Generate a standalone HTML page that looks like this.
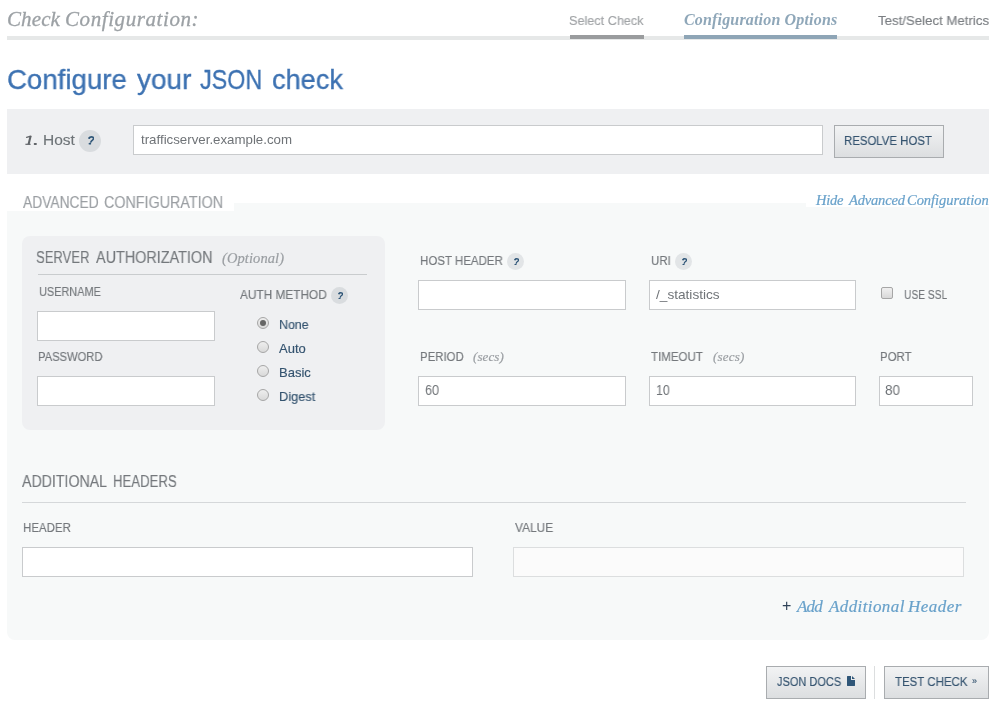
<!DOCTYPE html>
<html><head><meta charset="utf-8"><style>
html,body{margin:0;padding:0;background:#fff;width:998px;height:708px;overflow:hidden;position:relative}
</style></head><body>
<div style="position:absolute;left:6.60px;top:9.41px;font-family:'Liberation Serif', serif;font-size:21px;line-height:21px;color:#9ca1a5;font-style:italic;font-weight:normal;letter-spacing:0.100px;white-space:nowrap;will-change:transform;-webkit-text-stroke:0.3px #9ca1a5;">Check</div>
<div style="position:absolute;left:64.60px;top:9.41px;font-family:'Liberation Serif', serif;font-size:21px;line-height:21px;color:#9ca1a5;font-style:italic;font-weight:normal;letter-spacing:0.585px;white-space:nowrap;will-change:transform;-webkit-text-stroke:0.3px #9ca1a5;">Configuration:</div>
<div style="position:absolute;left:7px;top:36px;width:982px;height:4px;box-sizing:border-box;background:#e6e8e8"></div>
<div style="position:absolute;left:570px;top:35px;width:74px;height:4px;box-sizing:border-box;background:#9a9c9e"></div>
<div style="position:absolute;left:684px;top:35px;width:153px;height:4px;box-sizing:border-box;background:#8ea5b6"></div>
<div style="position:absolute;left:569.36px;top:14.00px;font-family:'Liberation Sans', sans-serif;font-size:13px;line-height:13px;color:#a0a3a6;font-style:normal;font-weight:normal;letter-spacing:0.000px;white-space:nowrap;will-change:transform;transform:scaleX(0.9741);transform-origin:0 0;-webkit-text-stroke:0.15px #a0a3a6;">Select Check</div>
<div style="position:absolute;left:683.56px;top:11.60px;font-family:'Liberation Serif', serif;font-size:16px;line-height:16px;color:#8fa7b9;font-style:italic;font-weight:bold;letter-spacing:0.168px;white-space:nowrap;will-change:transform;">Configuration Options</div>
<div style="position:absolute;left:877.84px;top:13.57px;font-family:'Liberation Sans', sans-serif;font-size:13.5px;line-height:13.5px;color:#7a7e82;font-style:normal;font-weight:normal;letter-spacing:0.000px;white-space:nowrap;will-change:transform;transform:scaleX(0.9806);transform-origin:0 0;-webkit-text-stroke:0.15px #7a7e82;">Test/Select Metrics</div>
<div style="position:absolute;left:6.92px;top:64.87px;font-family:'Liberation Sans', sans-serif;font-size:28.5px;line-height:28.5px;color:#3d72b2;font-style:normal;font-weight:normal;letter-spacing:0.000px;white-space:nowrap;will-change:transform;transform:scaleX(0.9691);transform-origin:0 0;-webkit-text-stroke:0.35px #3d72b2;">Configure</div>
<div style="position:absolute;left:137.04px;top:64.87px;font-family:'Liberation Sans', sans-serif;font-size:28.5px;line-height:28.5px;color:#3d72b2;font-style:normal;font-weight:normal;letter-spacing:0.000px;white-space:nowrap;will-change:transform;transform:scaleX(0.9809);transform-origin:0 0;-webkit-text-stroke:0.35px #3d72b2;">your</div>
<div style="position:absolute;left:200.48px;top:64.87px;font-family:'Liberation Sans', sans-serif;font-size:28.5px;line-height:28.5px;color:#3d72b2;font-style:normal;font-weight:normal;letter-spacing:0.000px;white-space:nowrap;will-change:transform;transform:scaleX(0.8187);transform-origin:0 0;-webkit-text-stroke:0.35px #3d72b2;">JSON</div>
<div style="position:absolute;left:272.08px;top:64.87px;font-family:'Liberation Sans', sans-serif;font-size:28.5px;line-height:28.5px;color:#3d72b2;font-style:normal;font-weight:normal;letter-spacing:0.000px;white-space:nowrap;will-change:transform;transform:scaleX(0.9525);transform-origin:0 0;-webkit-text-stroke:0.35px #3d72b2;">check</div>
<div style="position:absolute;left:7px;top:109px;width:982px;height:65px;box-sizing:border-box;background:#eff0f2"></div>
<svg style="position:absolute;left:24px;top:135px" width="14" height="11" viewBox="0 0 14 11"><path d="M2.6 2.4L6.9 1.2" stroke="#606468" stroke-width="1.3" stroke-linecap="round"/><path d="M6.6 1.0L4.6 9.2" stroke="#606468" stroke-width="2.1"/><path d="M1.4 9.3H6.6" stroke="#606468" stroke-width="1.2"/><rect x="9.8" y="8.0" width="3" height="1.9" rx="0.6" fill="#606468"/></svg>
<div style="position:absolute;left:42.52px;top:131.88px;font-family:'Liberation Sans', sans-serif;font-size:15.5px;line-height:15.5px;color:#6e7478;font-style:normal;font-weight:normal;letter-spacing:0.000px;white-space:nowrap;will-change:transform;transform:scaleX(0.9953);transform-origin:0 0;-webkit-text-stroke:0.15px #6e7478;">Host</div>
<div style="position:absolute;left:79px;top:130px;width:22px;height:22px;box-sizing:border-box;background:#d9dcdf;border-radius:50%"></div>
<svg style="position:absolute;left:87.8px;top:136.3px" width="6.2" height="8.5" viewBox="0 0 5 7"><path d="M0.9 1.7C1.3 0.5 4.5 0.2 4.5 2.0C4.5 3.5 2.6 3.5 2.3 5.0" fill="none" stroke="#2f5678" stroke-width="1.3" stroke-linecap="round"/><circle cx="1.1" cy="1.6" r="0.75" fill="#2f5678"/><ellipse cx="1.5" cy="6.3" rx="1.1" ry="0.7" fill="#2f5678"/></svg>
<div style="position:absolute;left:133px;top:125px;width:690px;height:30px;box-sizing:border-box;background:#fff;border:1px solid #c9cbcd"></div>
<div style="position:absolute;left:140.64px;top:133.00px;font-family:'Liberation Sans', sans-serif;font-size:13px;line-height:13px;color:#6f7377;font-style:normal;font-weight:normal;letter-spacing:0.000px;white-space:nowrap;will-change:transform;transform:scaleX(1.0214);transform-origin:0 0;">trafficserver.example.com</div>
<div style="position:absolute;left:834px;top:125px;width:110px;height:33px;box-sizing:border-box;background:linear-gradient(#f2f3f4,#dcdee0);border:1px solid #a9acaf"></div>
<div style="position:absolute;left:844.20px;top:134.00px;font-family:'Liberation Sans', sans-serif;font-size:13px;line-height:13px;color:#34536f;font-style:normal;font-weight:normal;letter-spacing:0.000px;white-space:nowrap;will-change:transform;transform:scaleX(0.8774);transform-origin:0 0;-webkit-text-stroke:0.15px #34536f;">RESOLVE HOST</div>
<div style="position:absolute;left:7px;top:203px;width:982px;height:437px;box-sizing:border-box;background:#f7f9f9;border-radius:0 0 8px 8px"></div>
<div style="position:absolute;left:7px;top:185px;width:227px;height:26px;box-sizing:border-box;background:#fff"></div>
<div style="position:absolute;left:806px;top:185px;width:183px;height:22px;box-sizing:border-box;background:#fff"></div>
<div style="position:absolute;left:22.80px;top:194.71px;font-family:'Liberation Sans', sans-serif;font-size:16px;line-height:16px;color:#9a9ea2;font-style:normal;font-weight:normal;letter-spacing:0.000px;white-space:nowrap;will-change:transform;transform:scaleX(0.8616);transform-origin:0 0;-webkit-text-stroke:0.15px #9a9ea2;">ADVANCED</div>
<div style="position:absolute;left:104.20px;top:194.71px;font-family:'Liberation Sans', sans-serif;font-size:16px;line-height:16px;color:#9a9ea2;font-style:normal;font-weight:normal;letter-spacing:0.000px;white-space:nowrap;will-change:transform;transform:scaleX(0.8954);transform-origin:0 0;-webkit-text-stroke:0.15px #9a9ea2;">CONFIGURATION</div>
<div style="position:absolute;left:816.00px;top:192.86px;font-family:'Liberation Serif', serif;font-size:14.5px;line-height:14.5px;color:#68a1ca;font-style:italic;font-weight:normal;letter-spacing:-0.267px;white-space:nowrap;will-change:transform;-webkit-text-stroke:0.2px #68a1ca;">Hide</div>
<div style="position:absolute;left:848.60px;top:192.86px;font-family:'Liberation Serif', serif;font-size:14.5px;line-height:14.5px;color:#68a1ca;font-style:italic;font-weight:normal;letter-spacing:-0.171px;white-space:nowrap;will-change:transform;-webkit-text-stroke:0.2px #68a1ca;">Advanced</div>
<div style="position:absolute;left:906.60px;top:192.86px;font-family:'Liberation Serif', serif;font-size:14.5px;line-height:14.5px;color:#68a1ca;font-style:italic;font-weight:normal;letter-spacing:-0.033px;white-space:nowrap;will-change:transform;-webkit-text-stroke:0.2px #68a1ca;">Configuration</div>
<div style="position:absolute;left:22px;top:236px;width:363px;height:194px;box-sizing:border-box;background:#eff0f2;border-radius:8px"></div>
<div style="position:absolute;left:36.20px;top:249.71px;font-family:'Liberation Sans', sans-serif;font-size:16px;line-height:16px;color:#74787c;font-style:normal;font-weight:normal;letter-spacing:0.000px;white-space:nowrap;will-change:transform;transform:scaleX(0.8167);transform-origin:0 0;-webkit-text-stroke:0.15px #74787c;">SERVER</div>
<div style="position:absolute;left:95.80px;top:249.71px;font-family:'Liberation Sans', sans-serif;font-size:16px;line-height:16px;color:#74787c;font-style:normal;font-weight:normal;letter-spacing:0.000px;white-space:nowrap;will-change:transform;transform:scaleX(0.8997);transform-origin:0 0;-webkit-text-stroke:0.15px #74787c;">AUTHORIZATION</div>
<div style="position:absolute;left:222.00px;top:250.86px;font-family:'Liberation Serif', serif;font-size:14.5px;line-height:14.5px;color:#9a9ea2;font-style:italic;font-weight:normal;letter-spacing:0.089px;white-space:nowrap;will-change:transform;-webkit-text-stroke:0.2px #9a9ea2;">(Optional)</div>
<div style="position:absolute;left:38px;top:274px;width:329px;height:1px;box-sizing:border-box;background:#c9ccce"></div>
<div style="position:absolute;left:38.68px;top:285.00px;font-family:'Liberation Sans', sans-serif;font-size:13px;line-height:13px;color:#74787c;font-style:normal;font-weight:normal;letter-spacing:0.000px;white-space:nowrap;will-change:transform;transform:scaleX(0.8396);transform-origin:0 0;-webkit-text-stroke:0.15px #74787c;">USERNAME</div>
<div style="position:absolute;left:37px;top:311px;width:178px;height:30px;box-sizing:border-box;background:#fff;border:1px solid #c9cbcd"></div>
<div style="position:absolute;left:38.20px;top:350.00px;font-family:'Liberation Sans', sans-serif;font-size:13px;line-height:13px;color:#74787c;font-style:normal;font-weight:normal;letter-spacing:0.000px;white-space:nowrap;will-change:transform;transform:scaleX(0.8609);transform-origin:0 0;-webkit-text-stroke:0.15px #74787c;">PASSWORD</div>
<div style="position:absolute;left:37px;top:376px;width:178px;height:30px;box-sizing:border-box;background:#fff;border:1px solid #c9cbcd"></div>
<div style="position:absolute;left:240.00px;top:288.00px;font-family:'Liberation Sans', sans-serif;font-size:13px;line-height:13px;color:#74787c;font-style:normal;font-weight:normal;letter-spacing:0.000px;white-space:nowrap;will-change:transform;transform:scaleX(0.9103);transform-origin:0 0;-webkit-text-stroke:0.15px #74787c;">AUTH METHOD</div>
<div style="position:absolute;left:331px;top:287px;width:17px;height:17px;box-sizing:border-box;background:#d9dcdf;border-radius:50%"></div>
<svg style="position:absolute;left:337.8px;top:291.8px" width="5.1" height="7.1" viewBox="0 0 5 7"><path d="M0.9 1.7C1.3 0.5 4.5 0.2 4.5 2.0C4.5 3.5 2.6 3.5 2.3 5.0" fill="none" stroke="#2f5678" stroke-width="1.3" stroke-linecap="round"/><circle cx="1.1" cy="1.6" r="0.75" fill="#2f5678"/><ellipse cx="1.5" cy="6.3" rx="1.1" ry="0.7" fill="#2f5678"/></svg>
<div style="position:absolute;left:257px;top:317px;width:12px;height:12px;box-sizing:border-box;background:linear-gradient(#eeeeee,#d9d9d9);border:1px solid #a6a6a6;border-radius:50%"></div>
<div style="position:absolute;left:278.52px;top:317.80px;font-family:'Liberation Sans', sans-serif;font-size:13px;line-height:13px;color:#34536f;font-style:normal;font-weight:normal;letter-spacing:0.000px;white-space:nowrap;will-change:transform;transform:scaleX(0.9547);transform-origin:0 0;-webkit-text-stroke:0.15px #34536f;">None</div>
<div style="position:absolute;left:257px;top:341px;width:12px;height:12px;box-sizing:border-box;background:linear-gradient(#eeeeee,#d9d9d9);border:1px solid #a6a6a6;border-radius:50%"></div>
<div style="position:absolute;left:279.00px;top:341.80px;font-family:'Liberation Sans', sans-serif;font-size:13px;line-height:13px;color:#34536f;font-style:normal;font-weight:normal;letter-spacing:0.000px;white-space:nowrap;will-change:transform;-webkit-text-stroke:0.15px #34536f;">Auto</div>
<div style="position:absolute;left:257px;top:365px;width:12px;height:12px;box-sizing:border-box;background:linear-gradient(#eeeeee,#d9d9d9);border:1px solid #a6a6a6;border-radius:50%"></div>
<div style="position:absolute;left:279.00px;top:365.80px;font-family:'Liberation Sans', sans-serif;font-size:13px;line-height:13px;color:#34536f;font-style:normal;font-weight:normal;letter-spacing:0.000px;white-space:nowrap;will-change:transform;-webkit-text-stroke:0.15px #34536f;">Basic</div>
<div style="position:absolute;left:257px;top:389px;width:12px;height:12px;box-sizing:border-box;background:linear-gradient(#eeeeee,#d9d9d9);border:1px solid #a6a6a6;border-radius:50%"></div>
<div style="position:absolute;left:278.68px;top:389.80px;font-family:'Liberation Sans', sans-serif;font-size:13px;line-height:13px;color:#34536f;font-style:normal;font-weight:normal;letter-spacing:0.000px;white-space:nowrap;will-change:transform;transform:scaleX(0.9836);transform-origin:0 0;-webkit-text-stroke:0.15px #34536f;">Digest</div>
<div style="position:absolute;left:260px;top:320px;width:6px;height:6px;box-sizing:border-box;background:#666;border-radius:50%"></div>
<div style="position:absolute;left:419.68px;top:254.00px;font-family:'Liberation Sans', sans-serif;font-size:13px;line-height:13px;color:#74787c;font-style:normal;font-weight:normal;letter-spacing:0.000px;white-space:nowrap;will-change:transform;transform:scaleX(0.8850);transform-origin:0 0;-webkit-text-stroke:0.15px #74787c;">HOST HEADER</div>
<div style="position:absolute;left:507px;top:253px;width:17px;height:17px;box-sizing:border-box;background:#e2e5e7;border-radius:50%"></div>
<svg style="position:absolute;left:513.8px;top:258.3px" width="5.1" height="7.1" viewBox="0 0 5 7"><path d="M0.9 1.7C1.3 0.5 4.5 0.2 4.5 2.0C4.5 3.5 2.6 3.5 2.3 5.0" fill="none" stroke="#2f5678" stroke-width="1.3" stroke-linecap="round"/><circle cx="1.1" cy="1.6" r="0.75" fill="#2f5678"/><ellipse cx="1.5" cy="6.3" rx="1.1" ry="0.7" fill="#2f5678"/></svg>
<div style="position:absolute;left:418px;top:280px;width:208px;height:30px;box-sizing:border-box;background:#fff;border:1px solid #c9cbcd"></div>
<div style="position:absolute;left:650.52px;top:254.00px;font-family:'Liberation Sans', sans-serif;font-size:13px;line-height:13px;color:#74787c;font-style:normal;font-weight:normal;letter-spacing:0.000px;white-space:nowrap;will-change:transform;transform:scaleX(0.8797);transform-origin:0 0;-webkit-text-stroke:0.15px #74787c;">URI</div>
<div style="position:absolute;left:675px;top:253px;width:17px;height:17px;box-sizing:border-box;background:#e2e5e7;border-radius:50%"></div>
<svg style="position:absolute;left:681.8px;top:258.0px" width="5.1" height="7.1" viewBox="0 0 5 7"><path d="M0.9 1.7C1.3 0.5 4.5 0.2 4.5 2.0C4.5 3.5 2.6 3.5 2.3 5.0" fill="none" stroke="#2f5678" stroke-width="1.3" stroke-linecap="round"/><circle cx="1.1" cy="1.6" r="0.75" fill="#2f5678"/><ellipse cx="1.5" cy="6.3" rx="1.1" ry="0.7" fill="#2f5678"/></svg>
<div style="position:absolute;left:649px;top:280px;width:207px;height:30px;box-sizing:border-box;background:#fff;border:1px solid #c9cbcd"></div>
<div style="position:absolute;left:656.00px;top:288.00px;font-family:'Liberation Sans', sans-serif;font-size:13px;line-height:13px;color:#6f7377;font-style:normal;font-weight:normal;letter-spacing:0.000px;white-space:nowrap;will-change:transform;transform:scaleX(1.0494);transform-origin:0 0;">/_statistics</div>
<div style="position:absolute;left:881px;top:287px;width:12px;height:12px;box-sizing:border-box;background:linear-gradient(#f0f0f0,#d8d8d8);border:1px solid #a6a6a6;border-radius:2px"></div>
<div style="position:absolute;left:903.84px;top:288.00px;font-family:'Liberation Sans', sans-serif;font-size:13px;line-height:13px;color:#74787c;font-style:normal;font-weight:normal;letter-spacing:0.000px;white-space:nowrap;will-change:transform;transform:scaleX(0.7878);transform-origin:0 0;-webkit-text-stroke:0.15px #74787c;">USE SSL</div>
<div style="position:absolute;left:419.68px;top:350.00px;font-family:'Liberation Sans', sans-serif;font-size:13px;line-height:13px;color:#74787c;font-style:normal;font-weight:normal;letter-spacing:0.000px;white-space:nowrap;will-change:transform;transform:scaleX(0.8787);transform-origin:0 0;-webkit-text-stroke:0.15px #74787c;">PERIOD</div>
<div style="position:absolute;left:472.64px;top:350.11px;font-family:'Liberation Serif', serif;font-size:13px;line-height:13px;color:#9a9ea2;font-style:italic;font-weight:normal;letter-spacing:0.096px;white-space:nowrap;will-change:transform;-webkit-text-stroke:0.2px #9a9ea2;">(secs)</div>
<div style="position:absolute;left:418px;top:376px;width:208px;height:30px;box-sizing:border-box;background:#fff;border:1px solid #c9cbcd"></div>
<div style="position:absolute;left:424.60px;top:383.45px;font-family:'Liberation Sans', sans-serif;font-size:14px;line-height:14px;color:#6f7377;font-style:normal;font-weight:normal;letter-spacing:0.000px;white-space:nowrap;will-change:transform;transform:scaleX(0.9053);transform-origin:0 0;">60</div>
<div style="position:absolute;left:651.32px;top:350.00px;font-family:'Liberation Sans', sans-serif;font-size:13px;line-height:13px;color:#74787c;font-style:normal;font-weight:normal;letter-spacing:0.000px;white-space:nowrap;will-change:transform;transform:scaleX(0.8859);transform-origin:0 0;-webkit-text-stroke:0.15px #74787c;">TIMEOUT</div>
<div style="position:absolute;left:713.00px;top:350.11px;font-family:'Liberation Serif', serif;font-size:13px;line-height:13px;color:#9a9ea2;font-style:italic;font-weight:normal;letter-spacing:0.192px;white-space:nowrap;will-change:transform;-webkit-text-stroke:0.2px #9a9ea2;">(secs)</div>
<div style="position:absolute;left:649px;top:376px;width:207px;height:30px;box-sizing:border-box;background:#fff;border:1px solid #c9cbcd"></div>
<div style="position:absolute;left:656.00px;top:383.45px;font-family:'Liberation Sans', sans-serif;font-size:14px;line-height:14px;color:#6f7377;font-style:normal;font-weight:normal;letter-spacing:0.000px;white-space:nowrap;will-change:transform;transform:scaleX(0.8866);transform-origin:0 0;">10</div>
<div style="position:absolute;left:880.36px;top:350.00px;font-family:'Liberation Sans', sans-serif;font-size:13px;line-height:13px;color:#74787c;font-style:normal;font-weight:normal;letter-spacing:0.000px;white-space:nowrap;will-change:transform;transform:scaleX(0.8773);transform-origin:0 0;-webkit-text-stroke:0.15px #74787c;">PORT</div>
<div style="position:absolute;left:879px;top:376px;width:94px;height:30px;box-sizing:border-box;background:#fff;border:1px solid #c9cbcd"></div>
<div style="position:absolute;left:885.12px;top:383.45px;font-family:'Liberation Sans', sans-serif;font-size:14px;line-height:14px;color:#6f7377;font-style:normal;font-weight:normal;letter-spacing:0.000px;white-space:nowrap;will-change:transform;transform:scaleX(0.9656);transform-origin:0 0;">80</div>
<div style="position:absolute;left:22.40px;top:473.71px;font-family:'Liberation Sans', sans-serif;font-size:16px;line-height:16px;color:#74787c;font-style:normal;font-weight:normal;letter-spacing:0.000px;white-space:nowrap;will-change:transform;transform:scaleX(0.8855);transform-origin:0 0;-webkit-text-stroke:0.15px #74787c;">ADDITIONAL</div>
<div style="position:absolute;left:112.60px;top:473.71px;font-family:'Liberation Sans', sans-serif;font-size:16px;line-height:16px;color:#74787c;font-style:normal;font-weight:normal;letter-spacing:0.000px;white-space:nowrap;will-change:transform;transform:scaleX(0.8218);transform-origin:0 0;-webkit-text-stroke:0.15px #74787c;">HEADERS</div>
<div style="position:absolute;left:22px;top:502px;width:944px;height:1px;box-sizing:border-box;background:#d5d8da"></div>
<div style="position:absolute;left:23.36px;top:521.00px;font-family:'Liberation Sans', sans-serif;font-size:13px;line-height:13px;color:#74787c;font-style:normal;font-weight:normal;letter-spacing:0.000px;white-space:nowrap;will-change:transform;transform:scaleX(0.8837);transform-origin:0 0;-webkit-text-stroke:0.15px #74787c;">HEADER</div>
<div style="position:absolute;left:22px;top:547px;width:451px;height:30px;box-sizing:border-box;background:#fff;border:1px solid #c9cbcd"></div>
<div style="position:absolute;left:515.48px;top:521.00px;font-family:'Liberation Sans', sans-serif;font-size:13px;line-height:13px;color:#74787c;font-style:normal;font-weight:normal;letter-spacing:0.000px;white-space:nowrap;will-change:transform;transform:scaleX(0.9162);transform-origin:0 0;-webkit-text-stroke:0.15px #74787c;">VALUE</div>
<div style="position:absolute;left:513px;top:547px;width:451px;height:30px;box-sizing:border-box;background:#fbfbfb;border:1px solid #dcdedf"></div>
<div style="position:absolute;left:782.00px;top:598.46px;font-family:'Liberation Sans', sans-serif;font-size:16px;line-height:16px;color:#2f4258;font-style:normal;font-weight:normal;letter-spacing:0.000px;white-space:nowrap;will-change:transform;">+</div>
<div style="position:absolute;left:796.60px;top:597.76px;font-family:'Liberation Serif', serif;font-size:17px;line-height:17px;color:#68a1ca;font-style:italic;font-weight:normal;letter-spacing:-0.800px;white-space:nowrap;will-change:transform;-webkit-text-stroke:0.2px #68a1ca;">Add</div>
<div style="position:absolute;left:829.20px;top:597.76px;font-family:'Liberation Serif', serif;font-size:17px;line-height:17px;color:#68a1ca;font-style:italic;font-weight:normal;letter-spacing:0.400px;white-space:nowrap;will-change:transform;-webkit-text-stroke:0.2px #68a1ca;">Additional</div>
<div style="position:absolute;left:908.40px;top:597.76px;font-family:'Liberation Serif', serif;font-size:17px;line-height:17px;color:#68a1ca;font-style:italic;font-weight:normal;letter-spacing:0.480px;white-space:nowrap;will-change:transform;-webkit-text-stroke:0.2px #68a1ca;">Header</div>
<div style="position:absolute;left:766px;top:666px;width:100px;height:33px;box-sizing:border-box;background:linear-gradient(#f2f3f4,#dcdee0);border:1px solid #a9acaf"></div>
<div style="position:absolute;left:777.16px;top:675.00px;font-family:'Liberation Sans', sans-serif;font-size:13px;line-height:13px;color:#34536f;font-style:normal;font-weight:normal;letter-spacing:0.000px;white-space:nowrap;will-change:transform;transform:scaleX(0.8459);transform-origin:0 0;-webkit-text-stroke:0.15px #34536f;">JSON DOCS</div>
<svg style="position:absolute;left:847px;top:676px" width="8" height="10" viewBox="0 0 8 10"><path d="M0.4 0H4V4H8V9.6Q8 10 7.6 10H0.4Q0 10 0 9.6V0.4Q0 0 0.4 0Z" fill="#2f5678"/><path d="M5 0L8 3H5Z" fill="#2f5678"/></svg>
<div style="position:absolute;left:874px;top:666px;width:1px;height:33px;box-sizing:border-box;background:#dcdedf"></div>
<div style="position:absolute;left:884px;top:666px;width:105px;height:33px;box-sizing:border-box;background:linear-gradient(#f2f3f4,#dcdee0);border:1px solid #a9acaf"></div>
<div style="position:absolute;left:895.32px;top:675.00px;font-family:'Liberation Sans', sans-serif;font-size:13px;line-height:13px;color:#34536f;font-style:normal;font-weight:normal;letter-spacing:0.000px;white-space:nowrap;will-change:transform;transform:scaleX(0.8829);transform-origin:0 0;-webkit-text-stroke:0.15px #34536f;">TEST CHECK</div>
<div style="position:absolute;left:972.00px;top:676.88px;font-family:'Liberation Sans', sans-serif;font-size:9px;line-height:9px;color:#34536f;font-style:normal;font-weight:normal;letter-spacing:0.000px;white-space:nowrap;will-change:transform;-webkit-text-stroke:0.15px #34536f;">»</div>
</body></html>
